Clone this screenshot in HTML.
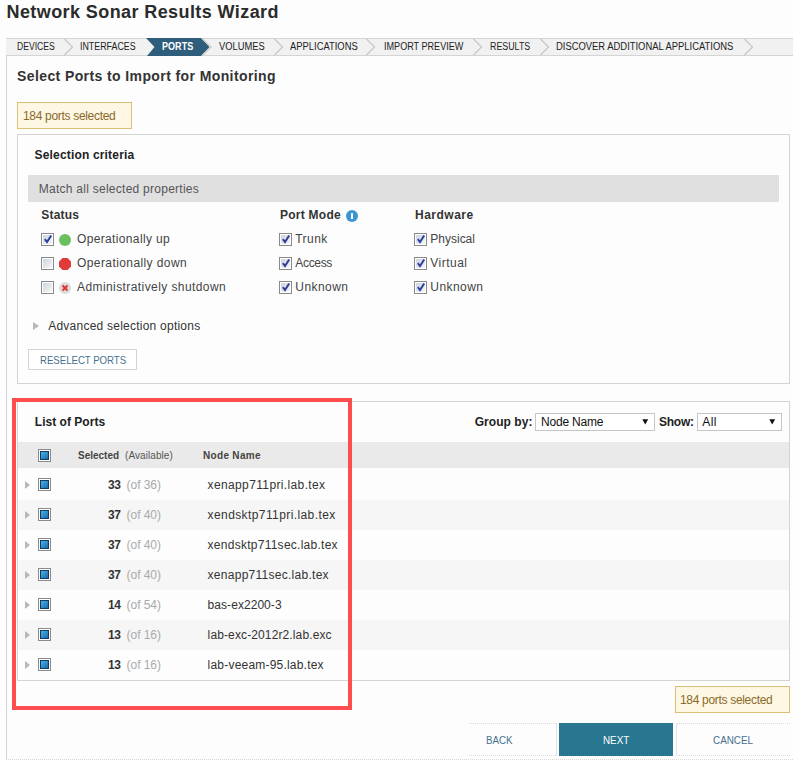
<!DOCTYPE html>
<html><head><meta charset="utf-8"><title>Network Sonar Results Wizard</title>
<style>
html,body{margin:0;padding:0;}
body{width:793px;height:760px;overflow:hidden;position:relative;background:#fdfdfd;font-family:"Liberation Sans",sans-serif;}
.t{position:absolute;white-space:nowrap;}
.a{position:absolute;box-sizing:border-box;}
.cb{position:absolute;width:13px;height:13px;box-sizing:border-box;border:1px solid #8a8a8a;background:#fff;}
.cb i{position:absolute;left:1px;top:1px;width:9px;height:9px;background:linear-gradient(135deg,#cfd6de,#f4f6f8);}
.cb svg{position:absolute;left:0;top:0;}
.bb{position:absolute;width:13px;height:13px;box-sizing:border-box;border:1px solid #8a8a8a;background:#fff;}
.bb i{position:absolute;left:1px;top:1px;width:9px;height:9px;box-sizing:border-box;border:1px solid #123a66;background:linear-gradient(135deg,#45b4e6,#1d6aa6);}
.arr{position:absolute;width:0;height:0;border-top:4.5px solid transparent;border-bottom:4.5px solid transparent;border-left:5px solid #b8b8b8;}
</style></head><body>
<div class="a" style="left:6px;top:38px;width:787px;height:18px;border-top:1px solid #d6d6d6;border-bottom:1px solid #d4d4d4;background:#f1f1f1"></div>
<svg class="a" style="left:0;top:0" width="793" height="60"><polyline points="64.5,39 72.5,47 64.5,55" fill="none" stroke="#c6c6c6" stroke-width="1.2"/><polyline points="274.5,39 282.5,47 274.5,55" fill="none" stroke="#c6c6c6" stroke-width="1.2"/><polyline points="366.5,39 374.5,47 366.5,55" fill="none" stroke="#c6c6c6" stroke-width="1.2"/><polyline points="473.5,39 481.5,47 473.5,55" fill="none" stroke="#c6c6c6" stroke-width="1.2"/><polyline points="540.5,39 548.5,47 540.5,55" fill="none" stroke="#c6c6c6" stroke-width="1.2"/><polyline points="744.5,39 752.5,47 744.5,55" fill="none" stroke="#c6c6c6" stroke-width="1.2"/><polygon points="146,38 201,38 209.5,47 201,56 147,56 154.5,47" fill="#2f5d7c"/><polyline points="202.5,39 211,47 202.5,55" fill="none" stroke="#c6c6c6" stroke-width="1.2"/></svg>
<div class="a" style="left:6px;top:56px;width:1px;height:704px;background:#d2d2d2"></div>
<div class="a" style="left:17px;top:102px;width:115px;height:27px;border:1px solid #d9bf78;background:#fdf7e3"></div>
<div class="a" style="left:17px;top:134px;width:773px;height:250px;border:1px solid #d4d4d4"></div>
<div class="a" style="left:28px;top:175px;width:751px;height:27px;background:#e0e0e1"></div>
<div class="cb" style="left:41px;top:233px"><i></i><svg width="13" height="13"><polyline points="2.8,5.2 5,8 9.2,1.5" fill="none" stroke="#2d3f9c" stroke-width="2"/></svg></div>
<div class="cb" style="left:41px;top:257px"><i></i></div>
<div class="cb" style="left:41px;top:281px"><i></i></div>
<div class="cb" style="left:279px;top:233px"><i></i><svg width="13" height="13"><polyline points="2.8,5.2 5,8 9.2,1.5" fill="none" stroke="#2d3f9c" stroke-width="2"/></svg></div>
<div class="cb" style="left:414px;top:233px"><i></i><svg width="13" height="13"><polyline points="2.8,5.2 5,8 9.2,1.5" fill="none" stroke="#2d3f9c" stroke-width="2"/></svg></div>
<div class="cb" style="left:279px;top:257px"><i></i><svg width="13" height="13"><polyline points="2.8,5.2 5,8 9.2,1.5" fill="none" stroke="#2d3f9c" stroke-width="2"/></svg></div>
<div class="cb" style="left:414px;top:257px"><i></i><svg width="13" height="13"><polyline points="2.8,5.2 5,8 9.2,1.5" fill="none" stroke="#2d3f9c" stroke-width="2"/></svg></div>
<div class="cb" style="left:279px;top:281px"><i></i><svg width="13" height="13"><polyline points="2.8,5.2 5,8 9.2,1.5" fill="none" stroke="#2d3f9c" stroke-width="2"/></svg></div>
<div class="cb" style="left:414px;top:281px"><i></i><svg width="13" height="13"><polyline points="2.8,5.2 5,8 9.2,1.5" fill="none" stroke="#2d3f9c" stroke-width="2"/></svg></div>
<div class="a" style="left:59px;top:234px;width:12px;height:12px;border-radius:50%;background:#6cbf5f"></div>
<svg class="a" style="left:59px;top:258px" width="12" height="12"><polygon points="3.5,0 8.5,0 12,3.5 12,8.5 8.5,12 3.5,12 0,8.5 0,3.5" fill="#e03a3a"/></svg>
<svg class="a" style="left:59px;top:282px" width="12" height="12"><circle cx="6" cy="6" r="6" fill="#dcdcdc"/><path d="M3.5,3.5 L8.5,8.5 M8.5,3.5 L3.5,8.5" stroke="#e03535" stroke-width="2"/></svg>
<svg class="a" style="left:346px;top:210px" width="12" height="12"><circle cx="6" cy="6" r="6" fill="#3b95d1"/><rect x="5" y="3" width="2" height="6" fill="#fff"/><rect x="5" y="3" width="2" height="1.5" fill="#e8eef4"/></svg>
<div class="arr" style="left:33px;top:322px;border-top-width:4px;border-bottom-width:4px;border-left-width:6px"></div>
<div class="a" style="left:28px;top:349px;width:109px;height:21px;border:1px solid #d4d4d4;background:#fff"></div>
<div class="a" style="left:17px;top:401px;width:773px;height:280px;border:1px solid #d4d4d4"></div>
<div class="a" style="left:535px;top:413px;width:120px;height:18px;border:1px solid #c6c6c6;background:#fff"></div>
<svg class="a" style="left:642px;top:419px" width="7" height="6"><polygon points="0.3,0.3 6.2,0.3 3.25,5.5" fill="#111"/></svg>
<div class="a" style="left:697px;top:413px;width:85px;height:18px;border:1px solid #c6c6c6;background:#fff"></div>
<svg class="a" style="left:769px;top:419px" width="7" height="6"><polygon points="0.3,0.3 6.2,0.3 3.25,5.5" fill="#111"/></svg>
<div class="a" style="left:18px;top:442px;width:771px;height:26px;background:#eaeaea"></div>
<div class="bb" style="left:38px;top:449px"><i></i></div>
<div class="arr" style="left:25px;top:481px"></div>
<div class="bb" style="left:38px;top:478px"><i></i></div>
<div class="a" style="left:18px;top:500px;width:771px;height:30px;background:#f6f6f6"></div>
<div class="arr" style="left:25px;top:511px"></div>
<div class="bb" style="left:38px;top:508px"><i></i></div>
<div class="arr" style="left:25px;top:541px"></div>
<div class="bb" style="left:38px;top:538px"><i></i></div>
<div class="a" style="left:18px;top:560px;width:771px;height:30px;background:#f6f6f6"></div>
<div class="arr" style="left:25px;top:571px"></div>
<div class="bb" style="left:38px;top:568px"><i></i></div>
<div class="arr" style="left:25px;top:601px"></div>
<div class="bb" style="left:38px;top:598px"><i></i></div>
<div class="a" style="left:18px;top:620px;width:771px;height:30px;background:#f6f6f6"></div>
<div class="arr" style="left:25px;top:631px"></div>
<div class="bb" style="left:38px;top:628px"><i></i></div>
<div class="arr" style="left:25px;top:661px"></div>
<div class="bb" style="left:38px;top:658px"><i></i></div>
<div class="a" style="left:12px;top:398px;width:340px;height:312px;border:4px solid #fe4d50"></div>
<div class="a" style="left:675px;top:686px;width:115px;height:27px;border:1px solid #d9bf78;background:#fdf7e3"></div>
<div class="a" style="left:469px;top:723px;width:88px;height:1px;background:repeating-linear-gradient(90deg,#dcdcdc 0 1px,transparent 1px 2px)"></div>
<div class="a" style="left:469px;top:755px;width:88px;height:1px;background:repeating-linear-gradient(90deg,#dcdcdc 0 1px,transparent 1px 2px)"></div>
<div class="a" style="left:556px;top:723px;width:1px;height:33px;background:#e2e2e2"></div>
<div class="a" style="left:559px;top:723px;width:114px;height:33px;background:#287690"></div>
<div class="a" style="left:677px;top:723px;width:113px;height:1px;background:repeating-linear-gradient(90deg,#dcdcdc 0 1px,transparent 1px 2px)"></div>
<div class="a" style="left:677px;top:755px;width:113px;height:1px;background:repeating-linear-gradient(90deg,#dcdcdc 0 1px,transparent 1px 2px)"></div>
<div class="a" style="left:676px;top:724px;width:1px;height:31px;background:#e2e2e2"></div>
<div class="a" style="left:6px;top:759px;width:787px;height:1px;background:repeating-linear-gradient(90deg,#d8d8d8 0 1px,transparent 1px 2px)"></div>
<span class="t" style="left:6.50px;top:2.76px;font-size:18px;line-height:18px;font-weight:bold;color:#2b2b2b;letter-spacing:0.411px;">Network Sonar Results Wizard</span>
<span class="t" style="left:17.00px;top:41.53px;font-size:10px;line-height:10px;font-weight:normal;color:#222;letter-spacing:0.000px;transform:scaleX(0.8591);transform-origin:0 0;">DEVICES</span>
<span class="t" style="left:80.00px;top:41.53px;font-size:10px;line-height:10px;font-weight:normal;color:#222;letter-spacing:0.000px;transform:scaleX(0.8872);transform-origin:0 0;">INTERFACES</span>
<span class="t" style="left:162.00px;top:41.53px;font-size:10px;line-height:10px;font-weight:bold;color:#fff;letter-spacing:0.000px;transform:scaleX(0.9057);transform-origin:0 0;">PORTS</span>
<span class="t" style="left:218.50px;top:41.53px;font-size:10px;line-height:10px;font-weight:normal;color:#222;letter-spacing:0.000px;transform:scaleX(0.9344);transform-origin:0 0;">VOLUMES</span>
<span class="t" style="left:290.00px;top:41.53px;font-size:10px;line-height:10px;font-weight:normal;color:#222;letter-spacing:0.000px;transform:scaleX(0.9394);transform-origin:0 0;">APPLICATIONS</span>
<span class="t" style="left:384.00px;top:41.53px;font-size:10px;line-height:10px;font-weight:normal;color:#222;letter-spacing:0.000px;transform:scaleX(0.9074);transform-origin:0 0;">IMPORT PREVIEW</span>
<span class="t" style="left:489.50px;top:41.53px;font-size:10px;line-height:10px;font-weight:normal;color:#222;letter-spacing:0.000px;transform:scaleX(0.8860);transform-origin:0 0;">RESULTS</span>
<span class="t" style="left:556.00px;top:41.53px;font-size:10px;line-height:10px;font-weight:normal;color:#222;letter-spacing:0.000px;transform:scaleX(0.9412);transform-origin:0 0;">DISCOVER ADDITIONAL APPLICATIONS</span>
<span class="t" style="left:17.00px;top:69.15px;font-size:14px;line-height:14px;font-weight:bold;color:#333;letter-spacing:0.398px;">Select Ports to Import for Monitoring</span>
<span class="t" style="left:23.00px;top:109.84px;font-size:12px;line-height:12px;font-weight:normal;color:#8a6a2a;letter-spacing:-0.317px;">184 ports selected</span>
<span class="t" style="left:34.50px;top:148.84px;font-size:12px;line-height:12px;font-weight:bold;color:#222;letter-spacing:0.174px;">Selection criteria</span>
<span class="t" style="left:38.80px;top:182.84px;font-size:12px;line-height:12px;font-weight:normal;color:#555;letter-spacing:0.259px;">Match all selected properties</span>
<span class="t" style="left:41.30px;top:208.84px;font-size:12px;line-height:12px;font-weight:bold;color:#333;letter-spacing:0.200px;">Status</span>
<span class="t" style="left:280.00px;top:208.84px;font-size:12px;line-height:12px;font-weight:bold;color:#333;letter-spacing:0.251px;">Port Mode</span>
<span class="t" style="left:415.00px;top:208.84px;font-size:12px;line-height:12px;font-weight:bold;color:#333;letter-spacing:0.497px;">Hardware</span>
<span class="t" style="left:77.00px;top:232.84px;font-size:12px;line-height:12px;font-weight:normal;color:#444;letter-spacing:0.352px;">Operationally up</span>
<span class="t" style="left:77.00px;top:256.84px;font-size:12px;line-height:12px;font-weight:normal;color:#444;letter-spacing:0.409px;">Operationally down</span>
<span class="t" style="left:77.00px;top:280.84px;font-size:12px;line-height:12px;font-weight:normal;color:#444;letter-spacing:0.414px;">Administratively shutdown</span>
<span class="t" style="left:295.30px;top:232.84px;font-size:12px;line-height:12px;font-weight:normal;color:#444;letter-spacing:0.443px;">Trunk</span>
<span class="t" style="left:295.30px;top:256.84px;font-size:12px;line-height:12px;font-weight:normal;color:#444;letter-spacing:-0.336px;">Access</span>
<span class="t" style="left:295.30px;top:280.84px;font-size:12px;line-height:12px;font-weight:normal;color:#444;letter-spacing:0.441px;">Unknown</span>
<span class="t" style="left:430.30px;top:232.84px;font-size:12px;line-height:12px;font-weight:normal;color:#444;letter-spacing:-0.003px;">Physical</span>
<span class="t" style="left:430.30px;top:256.84px;font-size:12px;line-height:12px;font-weight:normal;color:#444;letter-spacing:0.478px;">Virtual</span>
<span class="t" style="left:430.30px;top:280.84px;font-size:12px;line-height:12px;font-weight:normal;color:#444;letter-spacing:0.441px;">Unknown</span>
<span class="t" style="left:48.20px;top:319.84px;font-size:12px;line-height:12px;font-weight:normal;color:#333;letter-spacing:0.236px;">Advanced selection options</span>
<span class="t" style="left:39.70px;top:354.69px;font-size:11px;line-height:11px;font-weight:normal;color:#46708f;letter-spacing:0.000px;transform:scaleX(0.8732);transform-origin:0 0;">RESELECT PORTS</span>
<span class="t" style="left:34.80px;top:415.84px;font-size:12px;line-height:12px;font-weight:bold;color:#222;letter-spacing:0.023px;">List of Ports</span>
<span class="t" style="left:474.70px;top:415.84px;font-size:12px;line-height:12px;font-weight:bold;color:#222;letter-spacing:0.058px;">Group by:</span>
<span class="t" style="left:541.10px;top:415.84px;font-size:12px;line-height:12px;font-weight:normal;color:#111;letter-spacing:-0.207px;">Node Name</span>
<span class="t" style="left:659.00px;top:415.84px;font-size:12px;line-height:12px;font-weight:bold;color:#222;letter-spacing:-0.250px;">Show:</span>
<span class="t" style="left:702.30px;top:415.84px;font-size:12px;line-height:12px;font-weight:normal;color:#111;letter-spacing:0.365px;">All</span>
<span class="t" style="left:78.00px;top:450.54px;font-size:10px;line-height:10px;font-weight:bold;color:#444;letter-spacing:-0.003px;">Selected</span>
<span class="t" style="left:125.00px;top:450.54px;font-size:10px;line-height:10px;font-weight:normal;color:#555;letter-spacing:0.077px;">(Available)</span>
<span class="t" style="left:203.00px;top:450.54px;font-size:10px;line-height:10px;font-weight:bold;color:#444;letter-spacing:0.318px;">Node Name</span>
<span class="t" style="left:108.00px;top:478.84px;font-size:12px;line-height:12px;font-weight:bold;color:#333;letter-spacing:-0.374px;">33</span>
<span class="t" style="left:126.60px;top:478.84px;font-size:12px;line-height:12px;font-weight:normal;color:#aaa;letter-spacing:-0.048px;">(of 36)</span>
<span class="t" style="left:207.60px;top:478.84px;font-size:12px;line-height:12px;font-weight:normal;color:#333;letter-spacing:0.367px;">xenapp711pri.lab.tex</span>
<span class="t" style="left:108.00px;top:508.84px;font-size:12px;line-height:12px;font-weight:bold;color:#333;letter-spacing:-0.374px;">37</span>
<span class="t" style="left:126.60px;top:508.84px;font-size:12px;line-height:12px;font-weight:normal;color:#aaa;letter-spacing:-0.048px;">(of 40)</span>
<span class="t" style="left:207.60px;top:508.84px;font-size:12px;line-height:12px;font-weight:normal;color:#333;letter-spacing:0.401px;">xendsktp711pri.lab.tex</span>
<span class="t" style="left:108.00px;top:538.84px;font-size:12px;line-height:12px;font-weight:bold;color:#333;letter-spacing:-0.374px;">37</span>
<span class="t" style="left:126.60px;top:538.84px;font-size:12px;line-height:12px;font-weight:normal;color:#aaa;letter-spacing:-0.048px;">(of 40)</span>
<span class="t" style="left:207.60px;top:538.84px;font-size:12px;line-height:12px;font-weight:normal;color:#333;letter-spacing:0.261px;">xendsktp711sec.lab.tex</span>
<span class="t" style="left:108.00px;top:568.84px;font-size:12px;line-height:12px;font-weight:bold;color:#333;letter-spacing:-0.374px;">37</span>
<span class="t" style="left:126.60px;top:568.84px;font-size:12px;line-height:12px;font-weight:normal;color:#aaa;letter-spacing:-0.048px;">(of 40)</span>
<span class="t" style="left:207.60px;top:568.84px;font-size:12px;line-height:12px;font-weight:normal;color:#333;letter-spacing:0.270px;">xenapp711sec.lab.tex</span>
<span class="t" style="left:108.00px;top:598.84px;font-size:12px;line-height:12px;font-weight:bold;color:#333;letter-spacing:-0.374px;">14</span>
<span class="t" style="left:126.60px;top:598.84px;font-size:12px;line-height:12px;font-weight:normal;color:#aaa;letter-spacing:-0.048px;">(of 54)</span>
<span class="t" style="left:207.60px;top:598.84px;font-size:12px;line-height:12px;font-weight:normal;color:#333;letter-spacing:0.054px;">bas-ex2200-3</span>
<span class="t" style="left:108.00px;top:628.84px;font-size:12px;line-height:12px;font-weight:bold;color:#333;letter-spacing:-0.374px;">13</span>
<span class="t" style="left:126.60px;top:628.84px;font-size:12px;line-height:12px;font-weight:normal;color:#aaa;letter-spacing:-0.048px;">(of 16)</span>
<span class="t" style="left:207.60px;top:628.84px;font-size:12px;line-height:12px;font-weight:normal;color:#333;letter-spacing:0.124px;">lab-exc-2012r2.lab.exc</span>
<span class="t" style="left:108.00px;top:658.84px;font-size:12px;line-height:12px;font-weight:bold;color:#333;letter-spacing:-0.374px;">13</span>
<span class="t" style="left:126.60px;top:658.84px;font-size:12px;line-height:12px;font-weight:normal;color:#aaa;letter-spacing:-0.048px;">(of 16)</span>
<span class="t" style="left:207.60px;top:658.84px;font-size:12px;line-height:12px;font-weight:normal;color:#333;letter-spacing:0.207px;">lab-veeam-95.lab.tex</span>
<span class="t" style="left:680.00px;top:693.84px;font-size:12px;line-height:12px;font-weight:normal;color:#8a6a2a;letter-spacing:-0.317px;">184 ports selected</span>
<span class="t" style="left:486.00px;top:734.69px;font-size:11px;line-height:11px;font-weight:normal;color:#46708f;letter-spacing:0.000px;transform:scaleX(0.8818);transform-origin:0 0;">BACK</span>
<span class="t" style="left:603.00px;top:734.69px;font-size:11px;line-height:11px;font-weight:normal;color:#fff;letter-spacing:0.000px;transform:scaleX(0.8947);transform-origin:0 0;">NEXT</span>
<span class="t" style="left:713.00px;top:734.69px;font-size:11px;line-height:11px;font-weight:normal;color:#46708f;letter-spacing:0.000px;transform:scaleX(0.8988);transform-origin:0 0;">CANCEL</span>
</body></html>
